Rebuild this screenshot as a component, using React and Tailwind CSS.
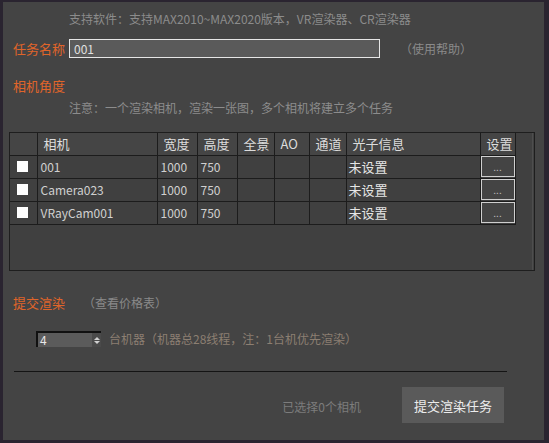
import React from "react";

const font = { fontFamily: '"Noto Sans CJK SC", "Liberation Sans", sans-serif' };

const cols = [
  { w: "w-[27px]", label: "" },
  { w: "w-[120px]", label: "相机" },
  { w: "w-[40px]", label: "宽度" },
  { w: "w-[40px]", label: "高度" },
  { w: "w-[37px]", label: "全景" },
  { w: "w-[35px]", label: "AO" },
  { w: "w-[37px]", label: "通道" },
  { w: "w-[134px]", label: "光子信息" },
  { w: "w-[35px]", label: "设置" },
];

const rows = ["001", "Camera023", "VRayCam001"];

export default function App() {
  return (
    <div className="w-[549px] h-[443px] bg-[#2a2430] pt-[2px] pl-[3px] overflow-hidden" style={font}>
      <div className="w-[541px] h-[438px] bg-[#444444] relative text-[12px] leading-none">
        <div className="pl-[66px] pt-[11px] h-[37px] text-[#8c8c8c] text-[12px]">
          支持软件：支持MAX2010~MAX2020版本，VR渲染器、CR渲染器
        </div>
        <div className="flex items-center h-[19px]">
          <div className="w-[66px] pl-[10px] text-[#e0652a] text-[13px]">任务名称</div>
          <div className="w-[311px] h-[19px] bg-[#5a5a5a] border border-[#e6e6e6] flex items-center pl-[4px] text-[#e0e0e0] text-[12px]">
            001
          </div>
          <div className="pl-[20px] text-[#8a8a8a] text-[12px]">（使用帮助）</div>
        </div>
        <div className="pl-[10px] pt-[21px] h-[35px] text-[#e0652a] text-[13px]">相机角度</div>
        <div className="pl-[66px] pt-[9px] h-[39px] text-[#8c8c8c] text-[12px]">
          注意：一个渲染相机，渲染一张图，多个相机将建立多个任务
        </div>
        <div className="ml-[6px] w-[526px] h-[139px] border border-[#1e1e1e] border-r-0 flex bg-[#404040]">
          <div className="flex-1">
            <table className="border-collapse text-[12px]">
              <thead>
                <tr className="h-[22px] bg-[#454545]">
                  {cols.map((c, i) => (
                    <th
                      key={i}
                      className={`${c.w} border border-[#1c1c1c] border-t-0 ${i === 0 ? "border-l-0" : ""} text-left font-normal pl-[6px] text-[#dcdcdc] text-[13px]`}
                    >
                      {c.label}
                    </th>
                  ))}
                </tr>
              </thead>
              <tbody>
                {rows.map((r) => (
                  <tr key={r} className="h-[23px] bg-[#404040]">
                    <td className="border border-[#1c1c1c] border-l-0 w-[27px]">
                      <div className="w-[11px] h-[11px] bg-white ml-[7px]" />
                    </td>
                    <td className="border border-[#1c1c1c] pl-[3px] text-[#d0d0d0]">{r}</td>
                    <td className="border border-[#1c1c1c] pl-[3px] text-[#d0d0d0]">1000</td>
                    <td className="border border-[#1c1c1c] pl-[3px] text-[#d0d0d0]">750</td>
                    <td className="border border-[#1c1c1c]"></td>
                    <td className="border border-[#1c1c1c]"></td>
                    <td className="border border-[#1c1c1c]"></td>
                    <td className="border border-[#1c1c1c] pl-[2px] text-[#e6e6e6] text-[13px]">未设置</td>
                    <td className="border border-[#1c1c1c] p-0">
                      <div className="h-[21px] border border-[#cfcfcf] bg-[#444444] flex items-center justify-center text-[#bdbdbd] text-[10px]">
                        ...
                      </div>
                    </td>
                  </tr>
                ))}
              </tbody>
            </table>
          </div>
          <div className="w-[2px] border-l border-[#4e4e4e]" />
          <div className="w-[1px] bg-[#1e1e1e]" />
        </div>
        <div className="flex items-center h-[25px] mt-[19px]">
          <div className="w-[80px] pl-[10px] text-[#e0652a] text-[13px]">提交渲染</div>
          <div className="text-[#8a8a8a] text-[12px]">（查看价格表）</div>
        </div>
        <div className="flex items-center mt-[16px] pl-[33px] h-[16px]">
          <div className="w-[65px] h-[16px] flex border-t-2 border-l-2 border-[#111111] bg-[#5b5b5b]">
            <div className="flex-1 text-[#e8e8e8] text-[12px] pl-[2px] leading-[14px]">4</div>
            <div className="w-[9px] bg-[#4a4a4a] flex flex-col items-center justify-center gap-[1px]">
              <div className="w-0 h-0 border-l-[3px] border-r-[3px] border-b-[3px] border-l-transparent border-r-transparent border-b-[#d0d0d0]" />
              <div className="w-0 h-0 border-l-[3px] border-r-[3px] border-t-[3px] border-l-transparent border-r-transparent border-t-[#d0d0d0]" />
            </div>
          </div>
          <div className="pl-[8px] text-[#8c7f72] text-[12px]">台机器（机器总28线程，注：1台机优先渲染）</div>
        </div>
        <div className="ml-[11px] mt-[24px] w-[493px] h-[1px] bg-[#141414]" />
        <div className="flex items-center justify-end mt-[15px] pr-[40px] h-[36px]">
          <div className="text-[#7c7c7c] text-[12px] mr-[41px] mt-[3px]">已选择0个相机</div>
          <div className="w-[102px] h-[36px] bg-[#5a5a5a] flex items-center justify-center text-[#ececec] text-[13px]">
            提交渲染任务
          </div>
        </div>
      </div>
    </div>
  );
}
